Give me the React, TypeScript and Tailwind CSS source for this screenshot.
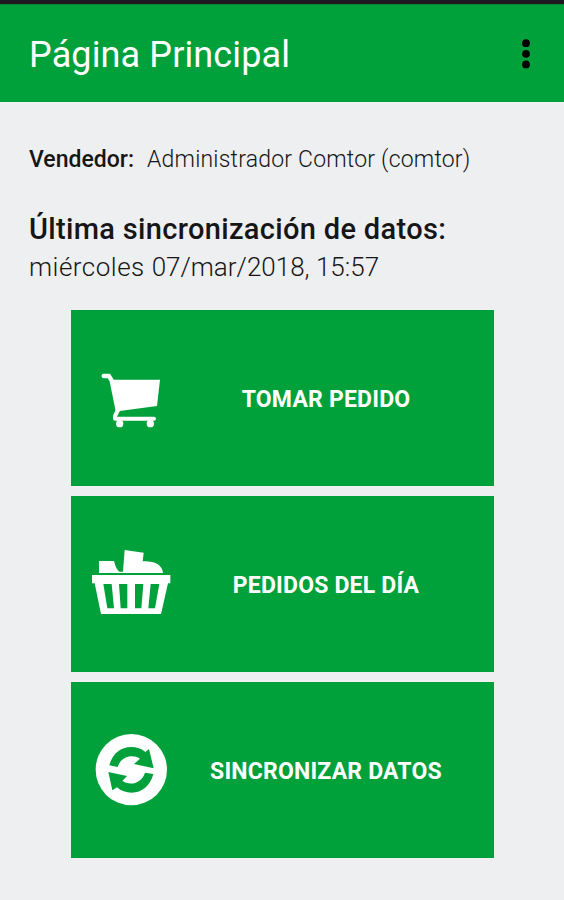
import type { ReactNode } from 'react';

type MenuItem = {
  id: string;
  label: string;
  icon: ReactNode;
};

function CartIcon() {
  return (
    <svg viewBox="-12 -18 300 264" className="h-[88px] w-[100px] shrink-0" fill="#fff">
      <path d="M56 48H72L80 62L98 150" fill="none" stroke="#fff" strokeWidth="13" strokeLinecap="round" strokeLinejoin="round" />
      <path d="M78 59H225L216 138L104 153L94 140Z" />
      <path d="M99 150L90 168V176H207" fill="none" stroke="#fff" strokeWidth="12" strokeLinecap="round" strokeLinejoin="round" />
      <circle cx="104" cy="191" r="11" />
      <circle cx="196" cy="191" r="11" />
    </svg>
  );
}

function BasketIcon() {
  return (
    <svg viewBox="3 0 300 264" className="h-[88px] w-[100px] shrink-0" fill="#fff">
      <path d="M57 63H102Q108 88 118 95H129L134 30L191 38L188 64C220 62 247 72 249 99H57Z" />
      <path
        fillRule="evenodd"
        d="M36 105H271V130H264L243 222H63L44 130H36ZM70 132L82 205H102L95 132ZM117 132L122 205H142V132ZM165 132V205H184L190 132ZM212 132L205 205H225L238 132Z"
      />
    </svg>
  );
}

function SyncIcon() {
  return (
    <svg viewBox="-12 3 300 264" className="h-[88px] w-[100px] shrink-0" fill="#00a13a">
      <circle cx="139" cy="134" r="107" fill="#fff" />
      <path d="M73 121C82 86 107 66 138 66C155 66 170 71 181 81L192 72L206 130L147 117L165 101C140 86 108 96 98 126Z" />
      <path d="M205 147C196 182 171 203 140 203C123 203 108 198 96 187L82 196L70 141L126 153L112 168C137 184 170 174 180 143Z" />
    </svg>
  );
}

const items: MenuItem[] = [
  { id: 'tomar', label: 'TOMAR PEDIDO', icon: <CartIcon /> },
  { id: 'pedidos', label: 'PEDIDOS DEL DÍA', icon: <BasketIcon /> },
  { id: 'sincronizar', label: 'SINCRONIZAR DATOS', icon: <SyncIcon /> },
];

function MenuButton({ item }: { item: MenuItem }) {
  return (
    <button className="flex h-44 w-full items-center bg-[#00a13a] pl-2.5 text-white">
      {item.icon}
      <span className="w-[290px] pt-1 text-center text-[23px] leading-7 font-bold tracking-[0.2px] whitespace-nowrap">
        {item.label}
      </span>
    </button>
  );
}

export default function App() {
  return (
    <div className="h-[900px] w-[564px] overflow-hidden bg-[#eeeff1] font-['Roboto',sans-serif] text-[#161616]">
      <div className="h-1 bg-[#201820]" />
      <header className="flex h-[98px] items-center justify-between border-t border-[#078533] bg-[#00a13a] pr-[34px] pl-[29px] text-white">
        <h1 className="pt-0.5 text-[36px] leading-[42px] tracking-[0.12px] whitespace-nowrap">Página Principal</h1>
        <button aria-label="Más opciones">
          <svg viewBox="0 0 8 30" className="h-[30px] w-2" fill="#000">
            <circle cx="4" cy="4.2" r="3.9" />
            <circle cx="4" cy="14.8" r="3.9" />
            <circle cx="4" cy="25.4" r="3.9" />
          </svg>
        </button>
      </header>

      <main className="pt-11">
        <section className="pl-[29px] whitespace-nowrap">
          <p className="flex h-7 text-[23px] leading-7">
            <span className="w-[118px] font-medium">Vendedor:</span>
            <span className="font-light tracking-[0.2px]">Administrador Comtor (comtor)</span>
          </p>
          <h2 className="mt-[37px] h-9 text-[29px] leading-9 font-medium tracking-[0.33px]">Última sincronización de datos:</h2>
          <p className="mt-1 h-8 text-[26px] leading-8 font-light">
            <span className="tracking-[0.5px]">miércoles </span>
            07/mar/2018, 15:57
          </p>
        </section>

        <nav className="mt-[27px] ml-[71px] flex w-[423px] flex-col gap-2.5">
          {items.map((item) => (
            <MenuButton key={item.id} item={item} />
          ))}
        </nav>
      </main>
    </div>
  );
}
